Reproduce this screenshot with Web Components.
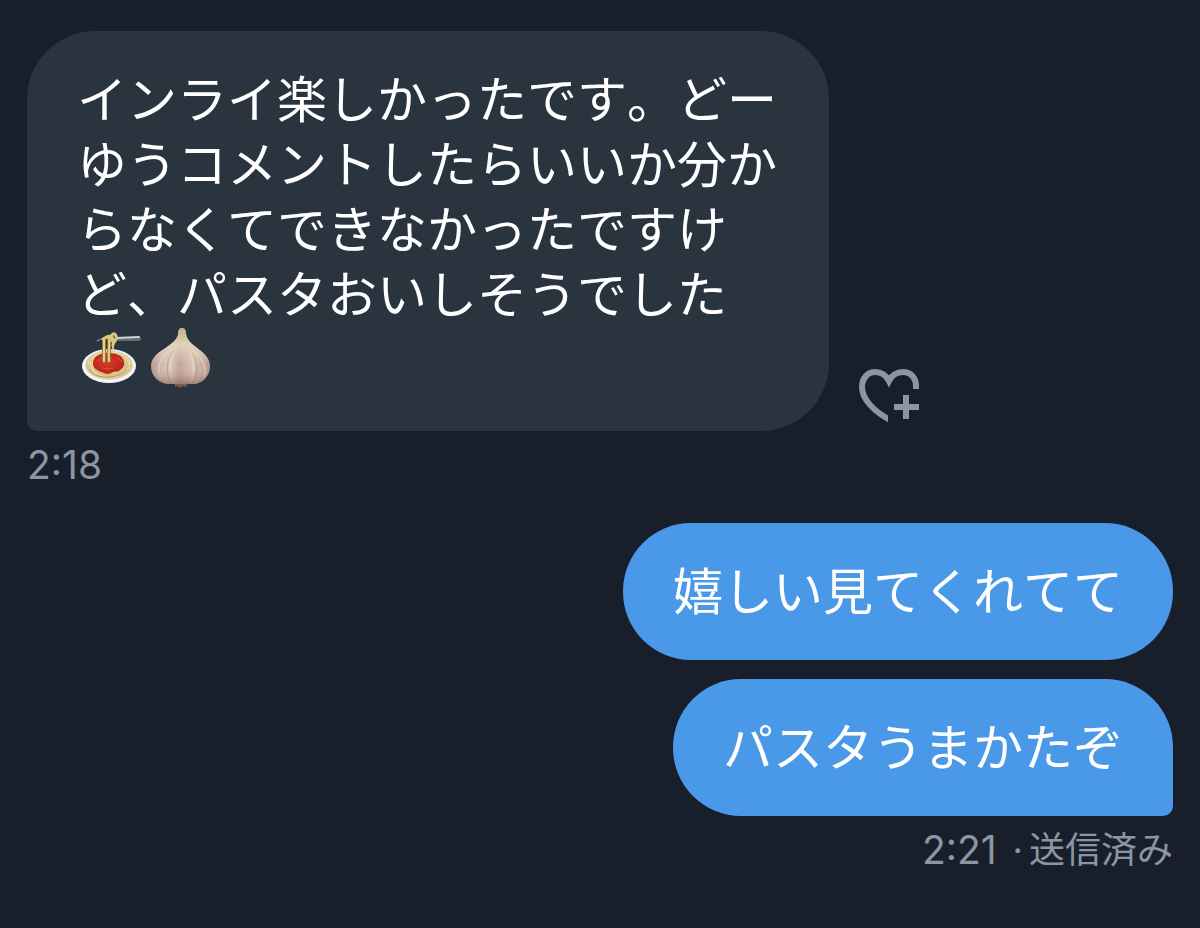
<!DOCTYPE html>
<html lang="ja">
<head>
<meta charset="utf-8">
<meta name="viewport" content="width=device-width, initial-scale=1">
<title>メッセージ</title>
<style>
  body {
    margin: 0;
    min-height: 100vh;
    background: #181f2a;
    color: #ffffff;
    font-family: Inter, "Noto Sans CJK JP", sans-serif;
  }
</style>
</head>
<body>
<dm-thread>
  <dm-message>
    <dm-bubble tail>インライ楽しかったです。どーゆうコメントしたらいいか分からなくてできなかったですけど、パスタおいしそうでした<emoji-icon name="spaghetti" label="スパゲッティ"></emoji-icon><emoji-icon name="garlic" label="にんにく"></emoji-icon></dm-bubble>
    <react-button slot="action"></react-button>
    <dm-status slot="status" time="2:18"></dm-status>
  </dm-message>
  <dm-message sent>
    <dm-bubble sent>嬉しい見てくれてて</dm-bubble>
    <dm-bubble sent tail>パスタうまかたぞ</dm-bubble>
    <dm-status slot="status" time="2:21">送信済み</dm-status>
  </dm-message>
</dm-thread>

<script>
(function () {
  const EMOJI = {
    spaghetti: `
      <svg viewBox="0 0 70 62" aria-hidden="true">
        <defs>
          <radialGradient id="sauce" cx="45%" cy="40%" r="60%">
            <stop offset="0" stop-color="#d93a26"></stop>
            <stop offset="1" stop-color="#b82217"></stop>
          </radialGradient>
        </defs>
        <ellipse cx="32" cy="39" rx="27" ry="17" fill="#f4f5f8"></ellipse>
        <ellipse cx="32" cy="38" rx="24" ry="15" fill="#dcdad2"></ellipse>
        <ellipse cx="32" cy="38" rx="23" ry="14" fill="#d9c58b"></ellipse>
        <g fill="none" stroke="#efe3b4" stroke-width="1">
          <path d="M11 37c2-9 12-12 22-12s20 5 20 13"></path>
          <path d="M13 41c4 7 12 9 20 9s15-3 18-9"></path>
          <path d="M12 34c3 4 3 10 8 13m27-20c1 6 7 8 5 15M18 28c-4 7-2 9 0 14"></path>
        </g>
        <path d="M12 42c5 7 12 8 18 8s15-1 20-8" fill="none" stroke="#b3934f" stroke-width="1"></path>
        <path d="M16 36c0-7 8-10 15-10s15 2 16 9c1 5-2 6-5 9-3 1-5 0-8 2-4 2-7 0-10-1-4-2-8-3-8-9z" fill="url(#sauce)"></path>
        <path d="M21 34c2-3 5-4 7-4m12 1c3 1 4 2 5 4m-19 6c4 2 7 0 10 0" fill="none" stroke="#e85a42" stroke-width="1"></path>
        <g fill="none" stroke-linecap="round">
          <path d="M27 12v22m5-22c1 8-1 14 0 22" stroke="#98742f" stroke-width="4"></path>
          <path d="M27 12v22m5-22c1 8-1 14 0 22m4-23c1 4-1 7 0 10" stroke="#e3d595" stroke-width="2"></path>
          <path d="M20 14c6-4 12-2 17-5" stroke="#a9adb3" stroke-width="1"></path>
          <path d="M40 12h22" stroke="#656c76" stroke-width="4"></path>
          <path d="M39 11l23-1" stroke="#cfd3d8" stroke-width="2"></path>
          <path d="M26 12c3-2 5-3 8-3m1 5c-1-3-1-6 1-7s4 2 3 5-3 4-3 6" stroke="#d8c97c" stroke-width="3"></path>
        </g>
      </svg>`,
    garlic: `
      <svg viewBox="0 0 70 62" aria-hidden="true">
        <defs>
          <linearGradient id="skin" x1="0" x2="1" y1="0" y2="0">
            <stop offset="0" stop-color="#b5988e"></stop>
            <stop offset=".2" stop-color="#d3bbb0"></stop>
            <stop offset=".32" stop-color="#dcc8bc"></stop>
            <stop offset=".48" stop-color="#c3a49c"></stop>
            <stop offset=".6" stop-color="#cfb3aa"></stop>
            <stop offset=".72" stop-color="#dac5b9"></stop>
            <stop offset="1" stop-color="#b3948a"></stop>
          </linearGradient>
          <linearGradient id="tip" x1="0" x2="0" y1="0" y2="1">
            <stop offset="0" stop-color="#c4b18e"></stop>
            <stop offset=".3" stop-color="#dfd3bb"></stop>
            <stop offset=".65" stop-color="#dfd3bb" stop-opacity="0"></stop>
            <stop offset="1" stop-color="#80584c" stop-opacity=".6"></stop>
          </linearGradient>
        </defs>
        <path d="M28 56h13l-2 4-3-1-3 2-2-2-3 1z" fill="#7d5f45"></path>
        <path d="M35 1c3 0 4 3 4 6 1 8 9 12 15 17 5 4 9 9 9 15 0 11-9 18-17 18H23C13 57 4 50 4 39c0-6 4-11 10-15 7-5 15-9 17-16 0-4 1-7 4-7z" fill="url(#skin)"></path>
        <g fill="none" stroke="#9d7770" opacity=".6">
          <path d="M32 18C20 28 17 43 24 56"></path>
          <path d="M38 18c12 10 15 25 8 38"></path>
        </g>
        <g fill="none" stroke="#eadbd0" stroke-width="2" opacity=".5">
          <path d="M32 17C23 29 21 44 27 56"></path>
          <path d="M38 16c9 13 11 28 5 40"></path>
          <path d="M28 20C14 29 9 38 13 50"></path>
          <path d="M42 20c14 10 18 20 15 30"></path>
        </g>
        <path d="M35 1c3 0 4 3 4 6 1 8 9 12 15 17 5 4 9 9 9 15 0 11-9 18-17 18H23C13 57 4 50 4 39c0-6 4-11 10-15 7-5 15-9 17-16 0-4 1-7 4-7z" fill="url(#tip)"></path>
      </svg>`,
  };

  class DmThread extends HTMLElement {
    constructor() {
      super();
      this.attachShadow({ mode: "open" }).innerHTML = `
        <style>
          :host {
            box-sizing: border-box;
            display: flex;
            flex-direction: column;
            gap: 32px;
            padding: 31px 27px;
          }
        </style>
        <slot></slot>
      `;
    }
  }

  class DmMessage extends HTMLElement {
    constructor() {
      super();
      this.attachShadow({ mode: "open" }).innerHTML = `
        <style>
          :host {
            display: flex;
            flex-direction: column;
            gap: 8px;
          }

          .row {
            align-items: flex-end;
            display: flex;
            gap: 28px;
          }

          .bubbles {
            display: flex;
            flex-direction: column;
            align-items: flex-start;
            gap: 19px;
            max-width: 70%;
          }

          :host([sent]) {
            align-items: flex-end;
          }

          :host([sent]) .row {
            justify-content: flex-end;
          }

          :host([sent]) .bubbles {
            align-items: flex-end;
            max-width: none;
          }
        </style>
        <div class="row">
          <div class="bubbles"><slot></slot></div>
          <slot name="action"></slot>
        </div>
        <slot name="status"></slot>
      `;
    }
  }

  class DmBubble extends HTMLElement {
    constructor() {
      super();
      this.attachShadow({ mode: "open" }).innerHTML = `
        <style>
          :host {
            background: #29343f;
            border-radius: 68px;
            box-sizing: border-box;
            display: block;
            font-family: "Noto Sans CJK JP", sans-serif;
            font-kerning: none;
            font-size: 50px;
            line-height: 65px;
            padding: 33px 50px 39px;
            text-spacing-trim: space-all;
          }

          :host([tail]) {
            border-bottom-left-radius: 10px;
          }

          :host([sent]) {
            background: #4a99e9;
          }

          :host([sent][tail]) {
            border-bottom-left-radius: 68px;
            border-bottom-right-radius: 10px;
          }
        </style>
        <slot></slot>
      `;
    }
  }

  class DmStatus extends HTMLElement {
    connectedCallback() {
      if (this.shadowRoot) {
        return;
      }

      const separator = this.textContent.trim() ? "<span>·</span>" : "";
      this.attachShadow({ mode: "open" }).innerHTML = `
        <style>
          :host {
            color: #8b95a3;
            display: flex;
            font-size: 36px;
            line-height: 52px;
          }

          time {
            font-size: 39px;
          }

          span {
            margin: 0 6px 0 16px;
          }
        </style>
        <time>${this.getAttribute("time")}</time>${separator}<slot></slot>
      `;
    }
  }

  class ReactButton extends HTMLElement {
    constructor() {
      super();
      this.attachShadow({ mode: "open" }).innerHTML = `
        <style>
          :host {
            display: block;
            margin-bottom: 6px;
          }

          button {
            appearance: none;
            background: none;
            border: 0;
            color: #8b95a3;
            cursor: pointer;
            display: block;
            padding: 0;
          }

          svg {
            display: block;
            height: 58px;
            width: 64px;
          }
        </style>
        <button type="button" aria-label="リアクションを追加">
          <svg viewBox="0 0 64 58" aria-hidden="true" fill="none" stroke="currentColor">
            <clipPath id="cut"><path d="M0 0h64v22H31v36H0z"></path></clipPath>
            <path clip-path="url(#cut)" d="M35 54C17 45 5 32 5 20C5 11 11 5 18 5C24 5 29 8 32 14C35 8 40 5 46 5C54 5 59 11 59 19V26" stroke-width="6"></path>
            <path d="M37 40h25M49 28v24" stroke-width="6"></path>
          </svg>
        </button>
      `;
    }
  }

  class EmojiIcon extends HTMLElement {
    connectedCallback() {
      if (this.shadowRoot) {
        return;
      }

      this.setAttribute("role", "img");
      this.setAttribute("aria-label", this.getAttribute("label"));
      this.attachShadow({ mode: "open" }).innerHTML = `
        <style>
          :host {
            display: inline-block;
            height: 68px;
            vertical-align: top;
            width: 70px;
          }

          svg {
            display: block;
            height: 100%;
            width: 100%;
          }
        </style>
        ${EMOJI[this.getAttribute("name")]}
      `;
    }
  }

  customElements.define("dm-thread", DmThread);
  customElements.define("dm-message", DmMessage);
  customElements.define("dm-bubble", DmBubble);
  customElements.define("dm-status", DmStatus);
  customElements.define("react-button", ReactButton);
  customElements.define("emoji-icon", EmojiIcon);
})();
</script>
</body>
</html>
